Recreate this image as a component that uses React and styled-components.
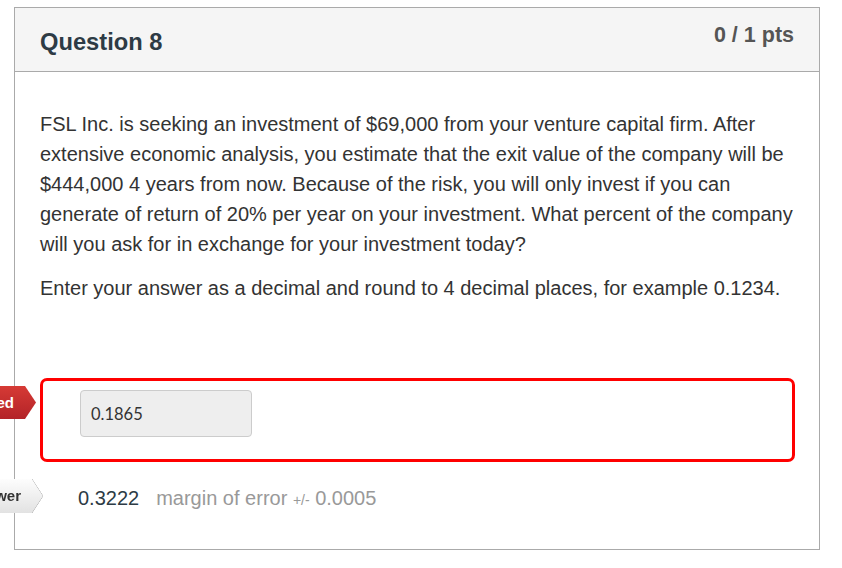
import React from "react";
import styled, { createGlobalStyle } from "styled-components";

const Global = createGlobalStyle`
  html, body { margin: 0; padding: 0; background: #fff; overflow: hidden; }
  body { font-family: "Liberation Sans", Arial, sans-serif; color: #333; }
`;

const Page = styled.div`
  padding: 7px 0 0 14px;
  width: 842px;
  height: 568px;
  box-sizing: border-box;
`;

const Card = styled.div`
  width: 806px;
  box-sizing: border-box;
  border: 1px solid #aaa;
  background: #fff;
`;

const Header = styled.div`
  display: flex;
  justify-content: space-between;
  align-items: flex-start;
  height: 63px;
  background: #f5f5f5;
  border-bottom: 1px solid #aaa;
  padding: 0 25px 0 25px;
`;

const Title = styled.h2`
  margin: 20px 0 0;
  font-size: 23.7px;
  line-height: 1.2;
  font-weight: bold;
  color: #2d3b45;
`;

const Points = styled.div`
  margin-top: 15px;
  font-size: 21.5px;
  line-height: 1.2;
  font-weight: bold;
  color: #555;
`;

const Body = styled.div`
  padding: 37px 23px 34px 25px;
`;

const Para = styled.p`
  margin: 0 0 ${(p) => p.$mb || 0}px;
  font-size: 20px;
  line-height: 30px;
  color: #333;
`;

const AnswerBox = styled.div`
  position: relative;
  margin: 75px 1px 0 0;
  border: 3px solid #f00;
  border-radius: 7px;
  padding: 9px 37px 22px;
`;

const Input = styled.div`
  width: 172px;
  height: 47px;
  box-sizing: border-box;
  background: #eee;
  border: 1px solid #ccc;
  border-radius: 4px;
  padding: 0 10px;
  display: flex;
  align-items: center;
  font-family: Lato, "Liberation Sans", sans-serif;
  font-size: 16.5px;
  color: #333;
`;

const Tag = styled.div`
  position: absolute;
  top: ${(p) => p.$top}px;
  right: ${(p) => p.$right};
  height: ${(p) => p.$h}px;
  padding: 0 22px 0 12px;
  display: flex;
  align-items: center;
  white-space: nowrap;
  font-size: 15px;
  font-weight: bold;
  clip-path: polygon(0 0, calc(100% - 11px) 0, 100% 50%, calc(100% - 11px) 100%, 0 100%);
  color: ${(p) => (p.$variant === "wrong" ? "#fff" : "#333")};
  background: ${(p) =>
    p.$variant === "wrong"
      ? "linear-gradient(#d63a35, #b32328)"
      : "linear-gradient(#fdfdfd, #e2e2e2)"};
`;

const TagFrame = styled.div`
  position: absolute;
  top: ${(p) => p.$top}px;
  right: ${(p) => p.$right};
  filter: drop-shadow(0 0 0.7px #8a8a8a) drop-shadow(0 0 0.3px #999);
`;

const CorrectRow = styled.div`
  position: relative;
  margin: 21px -23px 0 -25px;
  padding-left: 63px;
  display: flex;
  align-items: baseline;
  font-size: 20px;
  line-height: 30px;
`;

const Value = styled.span`
  color: #2d3b45;
`;

const Margin = styled.span`
  margin-left: 17px;
  color: #999;
`;

const Small = styled.span`
  font-size: 14px;
`;

export default function App() {
  return (
    <>
      <Global />
      <Page>
        <Card>
          <Header>
            <Title>Question 8</Title>
            <Points>0 / 1 pts</Points>
          </Header>
          <Body>
            <Para $mb={14}>
              FSL Inc. is seeking an investment of $69,000 from your venture capital firm. After
              extensive economic analysis, you estimate that the exit value of the company will be
              $444,000 4 years from now. Because of the risk, you will only invest if you can
              generate of return of 20% per year on your investment. What percent of the company
              will you ask for in exchange for your investment today?
            </Para>
            <Para>
              Enter your answer as a decimal and round to 4 decimal places, for example 0.1234.
            </Para>
            <AnswerBox>
              <Tag $variant="wrong" $top={5} $right="calc(100% + 7px)" $h={33}>
                You Answered
              </Tag>
              <Input>0.1865</Input>
            </AnswerBox>
            <CorrectRow>
              <TagFrame $top={-4} $right="calc(100% - 28px)">
                <Tag $variant="right" $top={0} $right="0" $h={34}>
                  Correct Answer
                </Tag>
              </TagFrame>
              <Value>0.3222</Value>
              <Margin>
                margin of error <Small>+/-</Small> 0.0005
              </Margin>
            </CorrectRow>
          </Body>
        </Card>
      </Page>
    </>
  );
}
